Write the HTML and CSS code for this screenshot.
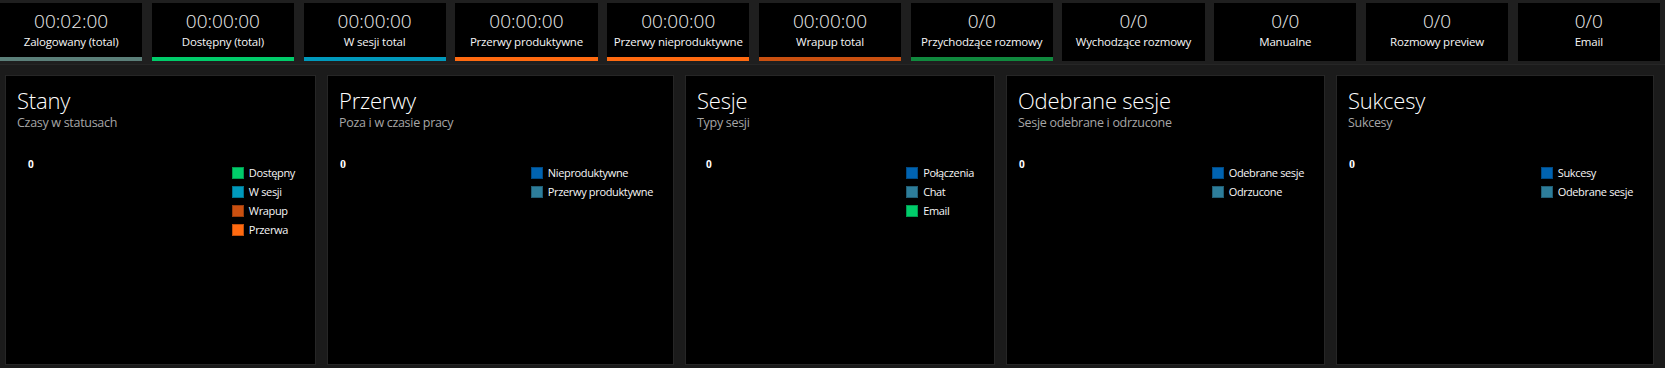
FILE: index.html
```html
<!DOCTYPE html>
<html lang="pl">
<head>
	<meta charset="UTF-8">
	<title>Statystyki agenta</title>
	<link rel="stylesheet" href="styles.css">
</head>
<body>
	<div class="tiles">
		<div class="tile bar_grey"><p class="val">00:02:00</p><p class="lbl">Zalogowany (total)</p></div>
		<div class="tile bar_green"><p class="val">00:00:00</p><p class="lbl">Dostępny (total)</p></div>
		<div class="tile bar_blue"><p class="val">00:00:00</p><p class="lbl">W sesji total</p></div>
		<div class="tile bar_orange"><p class="val">00:00:00</p><p class="lbl">Przerwy produktywne</p></div>
		<div class="tile bar_orange"><p class="val">00:00:00</p><p class="lbl">Przerwy nieproduktywne</p></div>
		<div class="tile bar_rust"><p class="val">00:00:00</p><p class="lbl">Wrapup total</p></div>
		<div class="tile bar_dgreen"><p class="val">0/0</p><p class="lbl">Przychodzące rozmowy</p></div>
		<div class="tile"><p class="val">0/0</p><p class="lbl">Wychodzące rozmowy</p></div>
		<div class="tile"><p class="val">0/0</p><p class="lbl">Manualne</p></div>
		<div class="tile"><p class="val">0/0</p><p class="lbl">Rozmowy preview</p></div>
		<div class="tile"><p class="val">0/0</p><p class="lbl">Email</p></div>
	</div>

	<div class="panels">
		<div class="panel">
			<h2 class="title">Stany</h2>
			<p class="sub">Czasy w statusach</p>
			<div class="chart">
				<span class="axis ax_wide">0</span>
				<ul class="legend">
					<li><i class="c_green"></i>Dostępny</li>
					<li><i class="c_blue"></i>W sesji</li>
					<li><i class="c_rust"></i>Wrapup</li>
					<li><i class="c_orange"></i>Przerwa</li>
				</ul>
			</div>
		</div>
		<div class="panel">
			<h2 class="title">Przerwy</h2>
			<p class="sub">Poza i w czasie pracy</p>
			<div class="chart">
				<span class="axis serif">0</span>
				<ul class="legend">
					<li><i class="c_navy"></i>Nieproduktywne</li>
					<li><i class="c_teal"></i>Przerwy produktywne</li>
				</ul>
			</div>
		</div>
		<div class="panel">
			<h2 class="title">Sesje</h2>
			<p class="sub">Typy sesji</p>
			<div class="chart">
				<span class="axis ax_mid">0</span>
				<ul class="legend">
					<li><i class="c_navy"></i>Połączenia</li>
					<li><i class="c_teal"></i>Chat</li>
					<li><i class="c_green"></i>Email</li>
				</ul>
			</div>
		</div>
		<div class="panel">
			<h2 class="title">Odebrane sesje</h2>
			<p class="sub">Sesje odebrane i odrzucone</p>
			<div class="chart">
				<span class="axis">0</span>
				<ul class="legend">
					<li><i class="c_navy"></i>Odebrane sesje</li>
					<li><i class="c_teal"></i>Odrzucone</li>
				</ul>
			</div>
		</div>
		<div class="panel">
			<h2 class="title">Sukcesy</h2>
			<p class="sub">Sukcesy</p>
			<div class="chart">
				<span class="axis serif">0</span>
				<ul class="legend">
					<li><i class="c_navy"></i>Sukcesy</li>
					<li><i class="c_teal"></i>Odebrane sesje</li>
				</ul>
			</div>
		</div>
	</div>
</body>
</html>
```

FILE: styles.css
```css
html,body{margin: 0;padding: 0;background: #1b1b1b;height: 100%;overflow: hidden;}
body,p,h2,ul,li{margin: 0;padding: 0;font-family: "Open Sans","Noto Sans",sans-serif;color: #fff;}

/* top counters */
.tiles{display: flex;gap: 9.5px;padding: 3px 5px 3px 0;background: #1f1f1f;border-bottom: 1px solid #262626;}
.tile{flex: 1;height: 48px;background: #000;text-align: center;padding-top: 6px;border-bottom: 4px solid #000;}
.val{font-size: 19px;font-weight: 300;line-height: 24px;color: #eee;}
.lbl{font-size: 11.5px;line-height: 16px;margin-top: 1px;letter-spacing: -0.2px;color: #f6f6f6;}
.bar_grey{border-bottom-color: #5b7f79;}
.bar_green{border-bottom-color: #00cc6a;}
.bar_blue{border-bottom-color: #0099bc;}
.bar_orange{border-bottom-color: #ff6a10;}
.bar_rust{border-bottom-color: #ca5010;}
.bar_dgreen{border-bottom-color: #10893e;}

/* chart panels */
.panels{display: grid;grid-template-columns: 311px 347px 310px 319px 318px;gap: 11px;padding: 10px 0 0 5px;}
.panel{height: 290px;box-sizing: border-box;background: #000;border: 1px solid #262626;padding: 10px 20px 0 11px;}
.title{font-size: 22px;font-weight: 300;line-height: 28px;letter-spacing: -0.2px;}
.sub{font-size: 12.5px;font-weight: 400;line-height: 16px;color: #a6a6a6;margin-top: 1px;letter-spacing: -0.3px;}
.chart{display: flex;justify-content: space-between;align-items: flex-start;margin-top: 27px;}
.axis{font-size: 10px;font-weight: 700;line-height: 12px;margin-left: 1px;}
.axis.ax_wide{margin-left: 11px;}
.axis.ax_mid{margin-left: 9px;}
.axis.serif{font-family: "Liberation Serif",serif;font-size: 12px;}
.legend{list-style: none;margin-top: 5px;}
.legend li{display: flex;align-items: center;gap: 5px;height: 19px;font-size: 11px;letter-spacing: -0.35px;color: #f6f6f6;}
.legend i{display: block;width: 10px;height: 10px;border: 1px solid rgba(0,0,0,0.25);}
.c_green{background: #00cc6a;}
.c_blue{background: #0099bc;}
.c_rust{background: #ca5010;}
.c_orange{background: #ff6a10;}
.c_navy{background: #0063b1;}
.c_teal{background: #2d7d9a;}
```
